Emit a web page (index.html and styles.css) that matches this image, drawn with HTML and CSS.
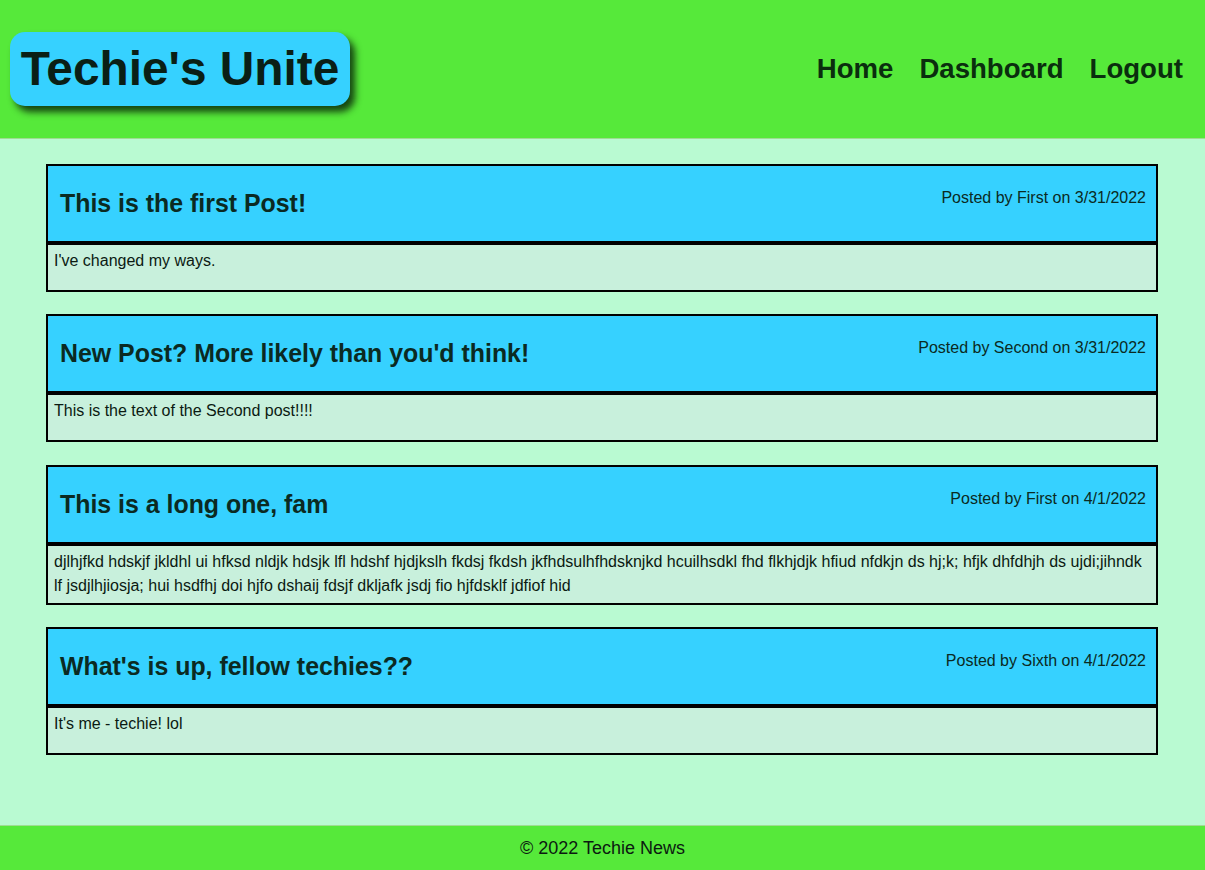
FILE: index.html
```html
<!DOCTYPE html>
<html lang="en">
<head>
<meta charset="utf-8">
<title>Techie's Unite</title>
<link rel="stylesheet" href="styles.css">
</head>
<body>
<div class="page">
  <header class="site-header">
    <h1 class="logo">Techie's Unite</h1>
    <nav class="nav">
      <a href="#">Home</a>
      <a href="#">Dashboard</a>
      <a href="#">Logout</a>
    </nav>
  </header>
  <main class="main">
    <article class="post">
      <div class="post-head">
        <h2 class="post-title">This is the first Post!</h2>
        <p class="post-meta">Posted by First on 3/31/2022</p>
      </div>
      <div class="post-body">I've changed my ways.</div>
    </article>
    <article class="post">
      <div class="post-head">
        <h2 class="post-title">New Post? More likely than you'd think!</h2>
        <p class="post-meta">Posted by Second on 3/31/2022</p>
      </div>
      <div class="post-body">This is the text of the Second post!!!!</div>
    </article>
    <article class="post">
      <div class="post-head">
        <h2 class="post-title">This is a long one, fam</h2>
        <p class="post-meta">Posted by First on 4/1/2022</p>
      </div>
      <div class="post-body">djlhjfkd hdskjf jkldhl ui hfksd nldjk hdsjk lfl hdshf hjdjkslh fkdsj fkdsh jkfhdsulhfhdsknjkd hcuilhsdkl fhd flkhjdjk hfiud nfdkjn ds hj;k; hfjk dhfdhjh ds ujdi;jihndk lf jsdjlhjiosja; hui hsdfhj doi hjfo dshaij fdsjf dkljafk jsdj fio hjfdsklf jdfiof hid</div>
    </article>
    <article class="post">
      <div class="post-head">
        <h2 class="post-title">What's is up, fellow techies??</h2>
        <p class="post-meta">Posted by Sixth on 4/1/2022</p>
      </div>
      <div class="post-body">It's me - techie! lol</div>
    </article>
  </main>
  <footer class="site-footer">© 2022 Techie News</footer>
</div>
</body>
</html>
```

FILE: styles.css
```css
* { box-sizing: border-box; }

html, body {
  margin: 0;
  padding: 0;
  height: 100%;
}

body {
  font-family: "Liberation Sans", Arial, sans-serif;
  background: #b9fad2;
  color: #0b1f14;
}

.page {
  min-height: 100vh;
  display: flex;
  flex-direction: column;
}

.site-header {
  height: 139px;
  background: #56e93a;
  border-bottom: 1px solid #9fdc92;
  display: flex;
  align-items: center;
  justify-content: space-between;
  padding: 0 22px 0 10px;
}

.logo {
  margin: -1px 0 0 0;
  width: 340px;
  height: 74px;
  background: #36d1ff;
  border-radius: 15px;
  box-shadow: 5px 6px 7px rgba(10, 40, 10, 0.85);
  font-size: 47.8px;
  font-weight: bold;
  line-height: 74px;
  text-align: center;
  color: #0a1f16;
}

.nav {
  display: flex;
  gap: 26px;
}

.nav a {
  font-size: 27.6px;
  font-weight: bold;
  color: #0a2e0e;
  text-decoration: none;
}

.main {
  flex: 1;
  padding: 25px 47px 47px 46px;
  display: flex;
  flex-direction: column;
  gap: 22.4px;
}

.post {
  border: 2px solid #000;
}

.post-head {
  height: 79px;
  background: #36d1ff;
  border-bottom: 4px solid #000;
  display: flex;
  justify-content: space-between;
  align-items: flex-start;
  padding: 0 10px 0 12px;
}

.post-title {
  margin: 0;
  padding-top: 23px;
  font-size: 24.9px;
  font-weight: bold;
  line-height: 28px;
  color: #0b2a22;
}

.post-meta {
  margin: 0;
  padding-top: 22px;
  font-size: 16px;
  line-height: 20px;
  color: #0b2a22;
}

.post-body {
  min-height: 45px;
  background: #c8f0dc;
  padding: 4px 6px 5px 6px;
  font-size: 16px;
  line-height: 24px;
  color: #0b1a12;
}

.site-footer {
  height: 45px;
  background: #56e93a;
  border-top: 1px solid #9fdc92;
  display: flex;
  align-items: center;
  justify-content: center;
  font-size: 18px;
  color: #0b1a10;
}
```
